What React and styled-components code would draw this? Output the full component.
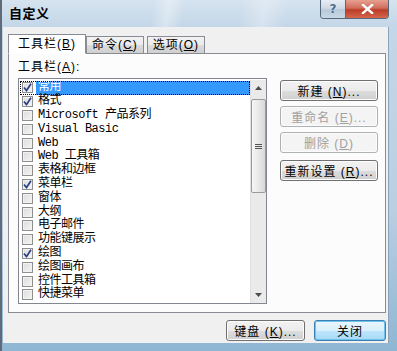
import React from 'react';
import styled, { createGlobalStyle } from 'styled-components';

const GlobalStyle = createGlobalStyle`
  html, body {
    margin: 0;
    padding: 0;
    background: #ffffff;
  }
  body {
    font-family: "Liberation Sans", "Noto Sans CJK SC", sans-serif;
    font-size: 12px;
    color: #000;
  }
`;

const FONT = `"Liberation Sans", "Noto Sans CJK SC", sans-serif`;
const MONO = `"Liberation Mono", "Noto Sans CJK SC", monospace`;

const Window = styled.div`
  width: 397px;
  height: 351px;
  display: flex;
  flex-direction: column;
  box-sizing: border-box;
  border-left: 2px solid #5f6b78;
  background: linear-gradient(180deg, #c6d8e9 0%, #b9cfe3 60%, #8fb6d3 100%);
  overflow: hidden;
`;

const TitleBar = styled.div`
  height: 27px;
  flex: none;
  display: flex;
  justify-content: space-between;
  align-items: flex-start;
  padding-left: 7px;
  padding-right: 8px;
  background:
    linear-gradient(100deg, transparent 0%, transparent 38%, rgba(255,255,255,0.35) 42%, transparent 46%, transparent 60%, rgba(255,255,255,0.3) 66%, transparent 72%),
    linear-gradient(180deg, #d6e3ef 0%, #c3d6e8 100%);
`;

const Title = styled.div`
  font-family: ${FONT};
  font-weight: bold;
  font-size: 13px;
  line-height: 27px;
  letter-spacing: 0.5px;
  color: #000;
`;

const Captions = styled.div`
  display: flex;
  height: 18px;
  border: 1px solid #56687b;
  border-top: none;
  border-radius: 0 0 4px 4px;
  overflow: hidden;
`;

const CaptionButton = styled.div`
  width: ${p => p.$w}px;
  height: 100%;
  display: flex;
  align-items: center;
  justify-content: center;
  background: ${p => p.$close
    ? 'linear-gradient(180deg, #e8a090 0%, #d06d5c 45%, #bb3c27 55%, #d5664c 100%)'
    : 'linear-gradient(180deg, #e6edf4 0%, #cfdbe7 45%, #b8c9da 55%, #c9d8e6 100%)'};
  border-left: ${p => p.$close ? '1px solid #6f5f68' : 'none'};
  font-family: "DejaVu Sans", sans-serif;
  font-weight: bold;
  font-size: 12px;
`;

const HelpMark = styled.span`
  color: #4d6a8a;
  text-shadow: 0 0 1px #fff;
`;

const Body = styled.div`
  flex: 1;
  display: flex;
  flex-direction: column;
  margin: 0 8px 8px 1px;
  background: #f0f0f0;
  padding: 6px 2px 0 5px;
  border-right: 1px solid #8aa3b8;
`;

const TabStrip = styled.div`
  display: flex;
  align-items: flex-end;
  height: 20px;
  position: relative;
  z-index: 1;
`;

const Tab = styled.div`
  font-family: ${FONT};
  font-size: 12px;
  height: ${p => p.$active ? 20 : 17}px;
  line-height: ${p => p.$active ? 19 : 17}px;
  padding: 0 ${p => p.$active ? 9 : 5}px;
  margin-left: ${p => p.$gap || 0}px;
  box-sizing: border-box;
  border: 1px solid #898c95;
  border-bottom: ${p => p.$active ? '1px solid #fff' : 'none'};
  background: ${p => p.$active ? '#ffffff' : 'linear-gradient(180deg, #f2f2f2 0%, #ebebeb 50%, #dcdcdc 51%, #cfcfcf 100%)'};
  white-space: nowrap;
  letter-spacing: 1px;
  margin-bottom: ${p => p.$active ? -1 : 0}px;
`;

const Panel = styled.div`
  width: 378px;
  height: 260px;
  box-sizing: border-box;
  border: 1px solid #898c95;
  background: #fcfcfc;
  padding: 6px 0 0 9px;
  display: flex;
  flex-direction: column;
`;

const Label = styled.div`
  font-family: ${FONT};
  font-size: 12px;
  height: 18px;
  line-height: 14px;
  letter-spacing: 1px;
`;

const PanelRow = styled.div`
  display: flex;
  align-items: flex-start;
  gap: 13px;
`;

const ListBox = styled.div`
  width: 249px;
  height: 226px;
  box-sizing: border-box;
  border: 1px solid #828790;
  background: #fff;
  display: flex;
  padding: 1px 0 0 1px;
`;

const Items = styled.div`
  flex: 1;
  display: flex;
  flex-direction: column;
  padding-top: 1px;
`;

const Item = styled.div`
  height: 13.8px;
  display: flex;
  align-items: center;
  gap: 3px;
  padding-left: 2px;
  outline: ${p => p.$focus ? '1px dotted #000' : 'none'};
  outline-offset: -1px;
`;

const ItemText = styled.span`
  flex: 1;
  height: 100%;
  display: flex;
  align-items: center;
  padding-left: 2px;
  font-family: ${MONO};
  font-size: 12px;
  line-height: 13px;
  letter-spacing: -0.5px;
  white-space: nowrap;
  background: ${p => p.$selected ? '#3399ff' : 'transparent'};
  color: ${p => p.$selected ? '#fff' : '#000'};
`;

const Box = styled.span`
  width: 11px;
  height: 11px;
  flex: none;
  box-sizing: border-box;
  border: 1px solid #8f8f8f;
  background: linear-gradient(135deg, #dcdcdc 0%, #f4f4f4 100%);
  box-shadow: inset 0 0 0 1px #f2f2f2;
  display: flex;
  align-items: center;
  justify-content: center;
`;

const ScrollBar = styled.div`
  width: 15px;
  flex: none;
  display: flex;
  flex-direction: column;
  background: #eaeaea;
  border-left: 1px solid #e0e0e0;
`;

const Arrow = styled.div`
  height: 16px;
  display: flex;
  align-items: center;
  justify-content: center;
`;

const Thumb = styled.div`
  margin: 3px 0 0 0;
  height: 94px;
  box-sizing: border-box;
  border: 1px solid #9b9b9b;
  border-radius: 2px;
  background: linear-gradient(90deg, #f6f6f6 0%, #e9e9e9 50%, #d8d8d8 100%);
  display: flex;
  align-items: center;
  justify-content: center;
`;

const Track = styled.div`
  flex: 1;
`;

const ButtonColumn = styled.div`
  display: flex;
  flex-direction: column;
  padding-top: 2px;
`;

const Button = styled.div`
  width: ${p => p.$w || 98}px;
  height: 21px;
  margin-top: ${p => p.$mt || 0}px;
  box-sizing: border-box;
  border: 1px solid ${p => p.$default ? '#3c7fb1' : p.$disabled ? '#adb2b5' : '#707070'};
  border-radius: 3px;
  background: ${p => p.$disabled
    ? '#f4f4f4'
    : p.$default
      ? 'linear-gradient(180deg, #eaf6fd 0%, #d9f0fc 50%, #bee6fd 51%, #a7d9f5 100%)'
      : 'linear-gradient(180deg, #f2f2f2 0%, #ebebeb 50%, #dddddd 51%, #cfcfcf 100%)'};
  box-shadow: ${p => p.$default ? 'inset 0 0 0 1px #6fc1ee' : 'inset 0 0 0 1px #fcfcfc'};
  color: ${p => p.$disabled ? '#a0a0a0' : '#000'};
  font-family: ${FONT};
  font-size: 12px;
  letter-spacing: 1px;
  display: flex;
  align-items: center;
  justify-content: center;
  white-space: nowrap;
`;

const Footer = styled.div`
  display: flex;
  justify-content: flex-end;
  gap: 9px;
  padding: 7px 0 0 0;
`;

const Check = () => (
  <svg width="9" height="9" viewBox="0 0 9 9">
    <path d="M1 4.5 L3.5 7.5 L8 0.8" fill="none" stroke="#2a3f8a" strokeWidth="1.7" />
  </svg>
);

const items = [
  { name: '常用', checked: true, selected: true },
  { name: '格式', checked: true },
  { name: 'Microsoft 产品系列' },
  { name: 'Visual Basic' },
  { name: 'Web' },
  { name: 'Web 工具箱' },
  { name: '表格和边框' },
  { name: '菜单栏', checked: true },
  { name: '窗体' },
  { name: '大纲' },
  { name: '电子邮件' },
  { name: '功能键展示' },
  { name: '绘图', checked: true },
  { name: '绘图画布' },
  { name: '控件工具箱' },
  { name: '快捷菜单' },
];

const Key = ({ pre, k, post = '' }) => (
  <span>{pre}(<u>{k}</u>){post}</span>
);

export default function App() {
  return (
    <>
      <GlobalStyle />
      <Window>
        <TitleBar>
          <Title>自定义</Title>
          <Captions>
            <CaptionButton $w={24}>
              <HelpMark>?</HelpMark>
            </CaptionButton>
            <CaptionButton $w={42} $close>
              <svg width="13" height="10" viewBox="0 0 13 10">
                <path d="M2 1 L11 9 M11 1 L2 9" stroke="#fff" strokeWidth="2.4" strokeLinecap="square" />
              </svg>
            </CaptionButton>
          </Captions>
        </TitleBar>
        <Body>
          <TabStrip>
            <Tab $active><Key pre="工具栏" k="B" /></Tab>
            <Tab><Key pre="命令" k="C" /></Tab>
            <Tab $gap={3}><Key pre="选项" k="O" /></Tab>
          </TabStrip>
          <Panel>
            <Label><Key pre="工具栏" k="A" post=":" /></Label>
            <PanelRow>
              <ListBox>
                <Items>
                  {items.map(it => (
                    <Item key={it.name} $focus={it.selected}>
                      <Box>{it.checked && <Check />}</Box>
                      <ItemText $selected={it.selected}>{it.name}</ItemText>
                    </Item>
                  ))}
                </Items>
                <ScrollBar>
                  <Arrow>
                    <svg width="7" height="4" viewBox="0 0 7 4"><path d="M0 4 L3.5 0 L7 4 Z" fill="#4d4d4d" /></svg>
                  </Arrow>
                  <Thumb>
                    <svg width="7" height="7" viewBox="0 0 7 7">
                      <path d="M0 1.5 H7 M0 3.5 H7 M0 5.5 H7" stroke="#555" strokeWidth="1" />
                    </svg>
                  </Thumb>
                  <Track />
                  <Arrow>
                    <svg width="7" height="4" viewBox="0 0 7 4"><path d="M0 0 L3.5 4 L7 0 Z" fill="#4d4d4d" /></svg>
                  </Arrow>
                </ScrollBar>
              </ListBox>
              <ButtonColumn>
                <Button><Key pre="新建 " k="N" post="..." /></Button>
                <Button $disabled $mt={5}><Key pre="重命名 " k="E" post="..." /></Button>
                <Button $disabled $mt={5}><Key pre="删除 " k="D" /></Button>
                <Button $mt={7}><Key pre="重新设置 " k="R" post="..." /></Button>
              </ButtonColumn>
            </PanelRow>
          </Panel>
          <Footer>
            <Button $w={79}><Key pre="键盘 " k="K" post="..." /></Button>
            <Button $w={72} $default>关闭</Button>
          </Footer>
        </Body>
      </Window>
    </>
  );
}
